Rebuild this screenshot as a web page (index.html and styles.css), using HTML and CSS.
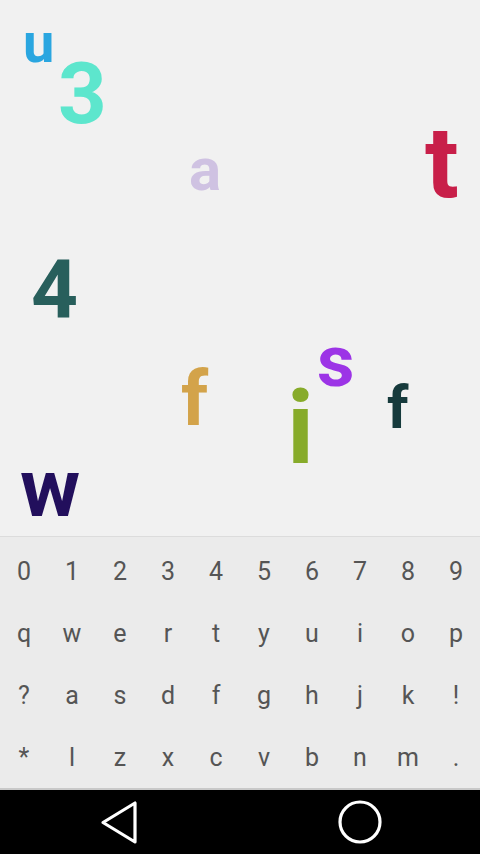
FILE: index.html
```html
<!DOCTYPE html>
<html lang="en">
<head>
  <meta charset="UTF-8">
  <meta name="viewport" content="width=device-width, initial-scale=1.0">
  <title>Letter Rain</title>
  <link rel="stylesheet" href="styles.css">
</head>
<body>
  <div class="screen">
    <!-- falling letters -->
    <div class="board">
      <span class="glyph g-u">u</span>
      <span class="glyph g-3">3</span>
      <span class="glyph g-a">a</span>
      <span class="glyph g-t">t</span>
      <span class="glyph g-4">4</span>
      <span class="glyph g-f1">f</span>
      <span class="glyph g-i">i</span>
      <span class="glyph g-s">s</span>
      <span class="glyph g-f2">f</span>
      <span class="glyph g-w">w</span>
    </div>

    <div class="keyboard">
      <button class="key">0</button>
      <button class="key">1</button>
      <button class="key">2</button>
      <button class="key">3</button>
      <button class="key">4</button>
      <button class="key">5</button>
      <button class="key">6</button>
      <button class="key">7</button>
      <button class="key">8</button>
      <button class="key">9</button>

      <button class="key">q</button>
      <button class="key">w</button>
      <button class="key">e</button>
      <button class="key">r</button>
      <button class="key">t</button>
      <button class="key">y</button>
      <button class="key">u</button>
      <button class="key">i</button>
      <button class="key">o</button>
      <button class="key">p</button>

      <button class="key">?</button>
      <button class="key">a</button>
      <button class="key">s</button>
      <button class="key">d</button>
      <button class="key">f</button>
      <button class="key">g</button>
      <button class="key">h</button>
      <button class="key">j</button>
      <button class="key">k</button>
      <button class="key">!</button>

      <button class="key">*</button>
      <button class="key">l</button>
      <button class="key">z</button>
      <button class="key">x</button>
      <button class="key">c</button>
      <button class="key">v</button>
      <button class="key">b</button>
      <button class="key">n</button>
      <button class="key">m</button>
      <button class="key">.</button>
    </div>

    <nav class="navbar">
      <svg class="nav-icon" width="48" height="48" viewBox="0 0 48 48">
        <path d="M39 5 L39 44 L7 24.5 Z" fill="none" stroke="#fff" stroke-width="3.2" stroke-linejoin="round"/>
      </svg>
      <svg class="nav-icon" width="48" height="48" viewBox="0 0 48 48">
        <circle cx="24" cy="24" r="20" fill="none" stroke="#fff" stroke-width="3.2"/>
      </svg>
    </nav>
  </div>
</body>
</html>
```

FILE: styles.css
```css
* {
  box-sizing: border-box;
  margin: 0;
  padding: 0;
}

body {
  width: 480px;
  height: 854px;
  background-color: #f1f1f1;
  font-family: Roboto, "Liberation Sans", sans-serif;
  overflow: hidden;
}

.screen {
  display: flex;
  flex-direction: column;
  height: 100%;
}

.board {
  position: relative;
  height: 536px;
  background-color: #f1f1f1;
}

.glyph {
  position: absolute;
  line-height: 1;
  font-weight: 700;
}

.g-u  { left: 23px;  top: 15px;  font-size: 56px;  color: #2aa6e0; }
.g-3  { left: 58px;  top: 52px;  font-size: 85px;  color: #5de6cd; }
.g-a  { left: 189px; top: 140px; font-size: 60px;  color: #cfc2e2; }
.g-t  { left: 425px; top: 113px; font-size: 100px; color: #c81f49; }
.g-4  { left: 31px;  top: 249px; font-size: 82px;  color: #285f5c; }
.g-f1 { left: 181px; top: 361px; font-size: 76px;  color: #d3a34a; }
.g-i  { left: 287px; top: 377px; font-size: 102px; color: #87ab2a; }
.g-s  { left: 317px; top: 325px; font-size: 73px;  color: #9c34e6; }
.g-f2 { left: 387px; top: 378px; font-size: 60px;  color: #163a3c; }
.g-w  { left: 20px;  top: 447px; font-size: 82px;  color: #220f5c; }

.keyboard {
  display: grid;
  grid-template-columns: repeat(10, 1fr);
  grid-template-rows: repeat(4, 1fr);
  height: 254px;
  background-color: #ebebeb;
  border-top: 1px solid #dcdcdc;
  border-bottom: 2px solid #c8c8c8;
  padding-top: 4px;
}

.key {
  background: none;
  border: none;
  font-family: Roboto, "Liberation Sans", sans-serif;
  font-size: 25px;
  font-weight: 400;
  color: #555;
}

.navbar {
  flex: 1;
  background-color: #000;
  display: flex;
  align-items: center;
  gap: 192px;
  padding-left: 96px;
}

.nav-icon {
  display: block;
}
```
